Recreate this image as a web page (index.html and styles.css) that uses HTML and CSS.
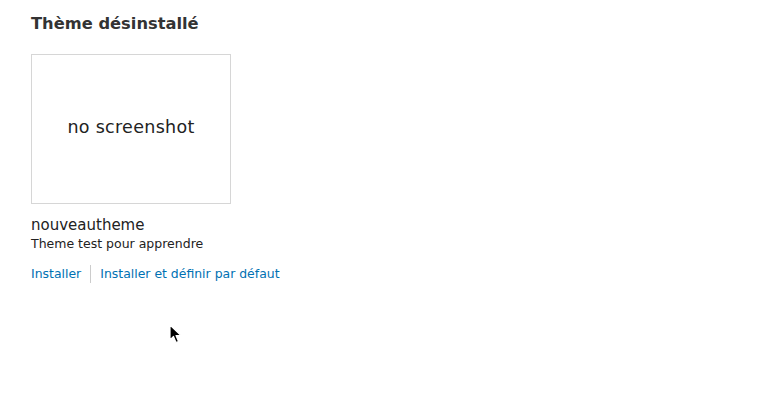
FILE: index.html
```html
<!DOCTYPE html>
<html lang="fr">
<head>
  <meta charset="UTF-8">
  <title>Thème désinstallé</title>
  <link rel="stylesheet" href="styles.css">
</head>
<body>
  <div class="page">
    <h2 class="section-title">Thème désinstallé</h2>

    <div class="theme">
      <div class="screenshot">no screenshot</div>
      <h3 class="theme-name">nouveautheme</h3>
      <div class="theme-desc">Theme test pour apprendre</div>
      <ul class="theme-links">
        <li><a href="#">Installer</a></li>
        <li><a href="#">Installer et définir par défaut</a></li>
      </ul>
    </div>
  </div>

  <svg class="cursor" width="14" height="20" viewBox="0 0 14 20">
    <path d="M1 1 L1 16 L4.5 12.5 L7 18.5 L9.5 17.5 L7 11.5 L12 11.5 Z" fill="#000" stroke="#fff" stroke-width="1.2" stroke-linejoin="round"/>
  </svg>
</body>
</html>
```

FILE: styles.css
```css
body {
  margin: 0;
  background: #fff;
  font-family: "DejaVu Sans", "Liberation Sans", sans-serif;
  color: #222;
}

.page {
  padding: 13px 31px;
}

.section-title {
  font-size: 16.3px;
  font-weight: bold;
  color: #333;
  margin: 0 0 19px;
  line-height: 22px;
}

.theme {
  width: 280px;
}

.screenshot {
  width: 198px;
  height: 144px;
  padding-bottom: 4px;
  border: 1px solid #d6d6d6;
  display: flex;
  align-items: center;
  justify-content: center;
  font-size: 17.5px;
  color: #222;
  letter-spacing: 0.3px;
}

.theme-name {
  font-size: 15px;
  font-weight: normal;
  margin: 11px 0 0;
  line-height: 20px;
  color: #222;
}

.theme-desc {
  font-size: 12.5px;
  line-height: 18px;
  color: #222;
}

.theme-links {
  list-style: none;
  margin: 12px 0 0;
  padding: 0;
  display: flex;
  font-size: 12.45px;
  line-height: 18px;
}

.theme-links li {
  padding: 0 9px;
  border-left: 1px solid #ccc;
}

.theme-links li:first-child {
  padding-left: 0;
  border-left: none;
}

.theme-links a {
  color: #0071b3;
  text-decoration: none;
}

.cursor {
  position: absolute;
  left: 169px;
  top: 324px;
}
```
